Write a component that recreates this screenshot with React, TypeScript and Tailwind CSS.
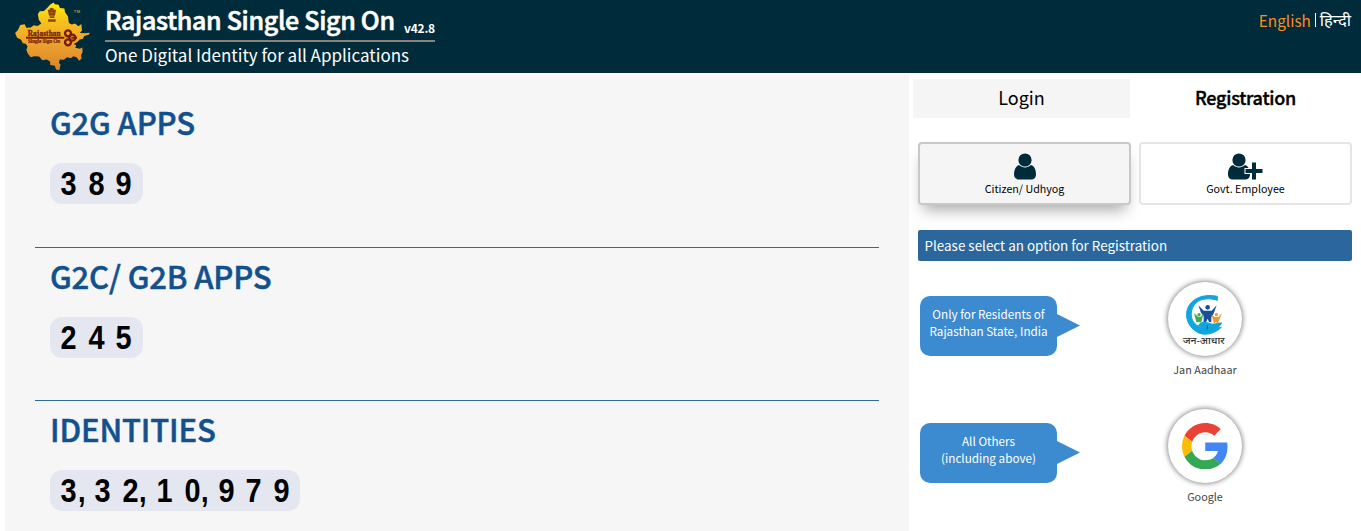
import React from "react";

const SANS = "font-['Noto_Sans_CJK_JP','Noto_Sans',sans-serif]";

function StateLogo() {
  return (
    <svg className="block h-[73px] w-[100px] shrink-0" viewBox="0 0 300 219">
      <defs>
        <linearGradient id="sand" x1="0" y1="0" x2="0" y2="1">
          <stop offset="0" stopColor="#fff000" />
          <stop offset=".2" stopColor="#f7cb18" />
          <stop offset=".5" stopColor="#f3aa28" />
          <stop offset="1" stopColor="#d98330" />
        </linearGradient>
      </defs>
      <path
        fill="url(#sand)"
        transform="translate(10.800 1) scale(.96 .97)"
        d="M146 13l10-6 4 5 12 2 4 10 14 1 2 12 9 12 3 21 9 5 10-3 11 8 9-7 2 20-7 8 18 1 13-2-2 6-15 4-4 9-10 2-8 8-11 6 8 4-3 8 14 3 8-4 1 14-5 10 2 10-8 7-8-11-10-3-8 6-12-3-10 8-12-1-3 10 5 6-4 17-10-2-4-12-14-2-1-11-10-6-14 2-10-11-15-1-11 3-9-11-5-12 4-10-6-9-9-1-6-12-12-5-6-15 9-9 7-16 14-2 5 11 14-1 9-7 12 2 12-7-8-12-3-17 6-9 13-1 10-9z"
      />
      <g fill="#8f4310">
        <circle cx="155" cy="30" r="7" />
        <path d="M143 29h8v8h8v-8h9l-3 18h-18zM149 49h14v5h-14zM144 58h23v7h-23z" />
      </g>
      <g fill="none" stroke="#7a1c0d" strokeWidth="7">
        <path d="M78 113h115M214 113h17" strokeWidth="6" />
        <circle cx="204" cy="100" r="9" />
        <circle cx="204" cy="127" r="9" />
        <circle cx="217" cy="113" r="9" />
      </g>
      <text x="83" y="107" textLength="99" fill="#7a1c0d" stroke="#7a1c0d" strokeWidth=".8" className="font-['Liberation_Serif',serif] text-[22px] font-bold">Rajasthan</text>
      <text x="84" y="130" textLength="97" fill="#7a1c0d" stroke="#7a1c0d" strokeWidth=".5" className="font-['Liberation_Serif',serif] text-[16px] font-bold">Single Sign On</text>
      <text x="221" y="38" textLength="19" fill="#b5962c" className="font-['Liberation_Sans',sans-serif] text-[12px] font-bold">TM</text>
    </svg>
  );
}

function Header() {
  return (
    <header className="flex h-[73px] justify-between bg-[#002b3a] text-white">
      <div className="flex">
        <StateLogo />
        <div className="ml-[5px] w-[330px]">
          <div className="flex h-[42px] items-baseline justify-between border-b-2 border-[#85857d] whitespace-nowrap">
            <h1 className="text-[25px] leading-[38px] font-medium tracking-[-0.3px] [-webkit-text-stroke:0.6px_white]">Rajasthan Single Sign On</h1>
            <span className="relative top-[3px] text-[12px] leading-[16px] font-bold tracking-[-0.2px]">v42.8</span>
          </div>
          <p className="text-[17px] leading-[25px] whitespace-nowrap">One Digital Identity for all Applications</p>
        </div>
      </div>
      <div className="mt-[10px] mr-[10px] flex h-5 items-center gap-[4px] text-[15.3px] leading-5">
        <span className="text-[#ff8c22]">English</span>
        <span className="h-3.5 w-px bg-white" />
        <span className="font-['Noto_Sans',sans-serif] text-[16.5px]">हिन्दी</span>
      </div>
    </header>
  );
}

function Counter({ value }: { value: string }) {
  return (
    <div className="flex h-[41px] w-fit items-center rounded-[12px] bg-[#e4e7ef] pr-[11.5px] pl-[11px] font-['Liberation_Sans',sans-serif] text-[34px] leading-[41px] font-bold text-black">
      {value.split("").map((c, i) =>
        c === "," ? (
          <span key={i} className="mr-[11px] -ml-[11px] w-[6.4px] origin-left scale-x-[.8]">,</span>
        ) : (
          <span key={i} className="mr-[12.7px] flex w-[15px] scale-x-[.85] justify-center last:mr-0">{c}</span>
        ),
      )}
    </div>
  );
}

function Stat({ title, value }: { title: string; value: string }) {
  return (
    <section className="mx-[30px] h-[153.5px] shrink-0 border-b border-[#2c699f] pl-[15px]">
      <h2 className="h-[69px] pt-[8px] text-[31px] leading-[40px] font-medium tracking-[-0.15px] text-[#12518d] [-webkit-text-stroke:0.5px_#12518d]">{title}</h2>
      <Counter value={value} />
    </section>
  );
}

function OptionRow({ lines, label, children }: { lines: string[]; label: string; children: React.ReactNode }) {
  return (
    <div className="flex h-[127px] items-start">
      <div className="mt-[16px] ml-[2px] flex w-[160px] items-center">
        <div className="h-[60px] w-[137px] rounded-[10px] bg-[#3c8bd0] pt-[9px] text-center text-[11.7px] leading-[17px] text-white">
          {lines.map((l) => (
            <div key={l}>{l}</div>
          ))}
        </div>
        <svg className="-mt-[2px] h-[23px] w-[23px]" viewBox="0 0 23 23">
          <path d="M0 0L23 11.5L0 23z" fill="#3c8bd0" />
        </svg>
      </div>
      <div className="ml-[75px] flex w-[100px] flex-col items-center">
        <div className="mt-[2px] flex h-[74px] w-[74px] items-center justify-center rounded-full bg-white shadow-[0_0_5px_1px_#8b8b8b]">
          {children}
        </div>
        <div className="mt-[5px] text-[10.8px] leading-[17px] text-[#444]">{label}</div>
      </div>
    </div>
  );
}

function JanLogo() {
  return (
    <svg className="h-[74px] w-[74px]" viewBox="54 51 222 222">
      <path d="M202 94c-37-8-76 3-89 36-10 28 3 58 31 73 24 10 50 3 70-16-18 5-36-6-52-11-12-1-12 5-6 8l16 4c-20 4-36-7-45-23-8-21-1-45 18-56 17-10 38-9 57-3z" fill="#11a5df" stroke="#11a5df" strokeWidth="3" />
      <path d="M151 173c14-7 24 2 37 3 11 0 22-6 29-2-9 14-20 22-36 21-15 0-24-9-39-11z" fill="#11a5df" />
      <circle cx="173" cy="127" r="7" fill="#174f9b" />
      <path d="M145 121l16 16h24l15-16-10 27-6 8v15h-7l-4-10-5 10h-7v-18l-8-10z" fill="#174f9b" />
      <circle cx="147" cy="149" r="5" fill="#3dae50" />
      <path d="M132 144l12 11h8l8-8-6 25h-15z" fill="#3dae50" />
      <circle cx="199" cy="149" r="5" fill="#ef982e" />
      <path d="M184 148l10 8h11l11-12-8 20-5 13-5-7-6 6z" fill="#ef982e" />
      <path d="M172 181v12" stroke="#174f9b" strokeWidth="3" />
      <text x="98" y="237" textLength="126" lengthAdjust="spacingAndGlyphs" fill="#333" className="font-['Noto_Sans',sans-serif] text-[29px] font-medium">जन-आधार</text>
    </svg>
  );
}

function GoogleLogo() {
  return (
    <svg className="h-[46.5px] w-[46.5px]" viewBox="0 0 48 48">
      <path fill="#EA4335" d="M24 9.5c3.54 0 6.71 1.22 9.21 3.6l6.85-6.85C35.9 2.38 30.47 0 24 0 14.62 0 6.51 5.38 2.56 13.22l7.98 6.19C12.43 13.72 17.74 9.5 24 9.5z" />
      <path fill="#4285F4" d="M46.98 24.55c0-1.57-.15-3.09-.38-4.55H24v9.02h12.94c-.58 2.96-2.26 5.48-4.78 7.18l7.73 6c4.51-4.18 7.09-10.36 7.09-17.65z" />
      <path fill="#FBBC05" d="M10.53 28.59c-.48-1.45-.76-2.99-.76-4.59s.27-3.14.76-4.59l-7.98-6.19C.92 16.46 0 20.12 0 24c0 3.88.92 7.54 2.56 10.78l7.97-6.19z" />
      <path fill="#34A853" d="M24 48c6.48 0 11.93-2.13 15.89-5.81l-7.73-6c-2.15 1.45-4.92 2.3-8.16 2.3-6.26 0-11.57-4.22-13.47-9.91l-7.98 6.19C6.51 42.62 14.62 48 24 48z" />
    </svg>
  );
}

function UserIcon({ plus = false }: { plus?: boolean }) {
  return (
    <svg className={plus ? "h-[27px] w-[35px]" : "h-[27px] w-[22px]"} viewBox={plus ? "0 0 35 27" : "0 0 22 27"} fill="#002b3a">
      <path d="M5 12C1.5 13 0 17 0 21.5 0 24.5 2 26.5 5 26.5H17c3 0 5-2 5-5C22 17 20.500 13 17 12c-3.500 3.200-8.500 3.200-12 0z" />
      <circle cx="11" cy="7" r="6.600" />
      {plus && <path d="M24 9.500h4v6.500h6.500v4H28v6.500h-4V20h-6.500v-4H24z" stroke="white" strokeWidth="2" paintOrder="stroke" />}
    </svg>
  );
}

function RegistrationPanel() {
  return (
    <aside className="w-[452px] bg-white pl-[4px]">
      <div className="mt-[6px] flex h-[39px] text-[18px] leading-[36px] text-black">
        <div className="w-[217px] bg-[#f5f5f5] text-center">Login</div>
        <div className="w-[231px] text-center font-medium tracking-[-0.25px] [-webkit-text-stroke:0.4px_black]">Registration</div>
      </div>
      <div className="mt-[24px] ml-[5px] flex gap-[8px] text-[10.7px] leading-[15px] text-black">
        <div className="flex h-[63px] w-[213px] flex-col items-center rounded-[4px] border-2 border-[#c8c8c8] bg-[#f5f5f5] pt-[9px] shadow-[0_10px_14px_-5px_#aaa]">
          <UserIcon />
          <div className="mt-[1px]">Citizen/ Udhyog</div>
        </div>
        <div className="flex h-[63px] w-[213px] flex-col items-center rounded-[4px] border-2 border-[#e5e5e5] bg-white pt-[9px]">
          <UserIcon plus />
          <div className="mt-[1px]">Govt. Employee</div>
        </div>
      </div>
      <div className="mt-[25px] ml-[5px] h-[31px] w-[434px] rounded-[2px] bg-[#2b679c] pl-[6.5px] text-[13.45px] leading-[31px] text-white">
        Please select an option for Registration
      </div>
      <div className="mt-[19px] ml-[5px]">
        <OptionRow lines={["Only for Residents of", "Rajasthan State, India"]} label="Jan Aadhaar">
          <JanLogo />
        </OptionRow>
        <OptionRow lines={["All Others", "(including above)"]} label="Google">
          <GoogleLogo />
        </OptionRow>
      </div>
    </aside>
  );
}

export default function App() {
  return (
    <div className={`flex h-[531px] w-[1361px] flex-col overflow-hidden bg-white ${SANS}`}>
      <Header />
      <main className="flex h-[458px]">
        <div className="mt-[2px] ml-[5px] flex w-[904px] flex-col overflow-hidden bg-[#f6f6f6] pt-[19px]">
          <Stat title="G2G APPS" value="389" />
          <Stat title="G2C/ G2B APPS" value="245" />
          <Stat title="IDENTITIES" value="3,32,10,979" />
        </div>
        <RegistrationPanel />
      </main>
    </div>
  );
}
